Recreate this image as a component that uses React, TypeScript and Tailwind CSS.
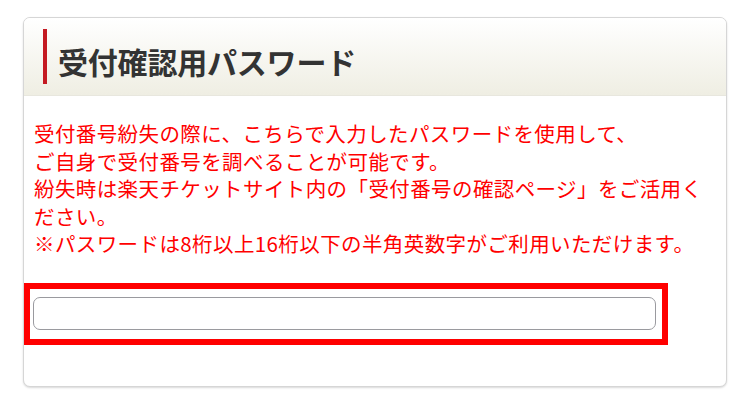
import React from "react";

export default function App() {
  const jp = { fontFamily: '"Noto Sans CJK JP", "Noto Sans", sans-serif' };
  return (
    <div className="w-[750px] h-[409px] bg-white pt-[17px] pl-[23px]" style={jp}>
      <div className="w-[704px] h-[370px] rounded-[7px] border border-[#d6d6d6] shadow-[0_1px_2px_rgba(0,0,0,0.15)] overflow-hidden bg-white flex flex-col">
        <div className="h-[78px] bg-gradient-to-b from-white to-[#efeee3] border-b border-[#e8e7de] flex items-center pl-[19px]">
          <div className="w-[4px] h-[55px] bg-[#c41a22]" />
          <h1 className="ml-[11px] mt-[8px] text-[30px] font-bold text-[#333333] leading-none tracking-[-0.2px]">
            受付確認用パスワード
          </h1>
        </div>
        <div className="pt-[24px] pl-[10px] text-[20.5px] leading-[27.5px] text-[#ff0000] whitespace-nowrap tracking-[0.4px]">
          受付番号紛失の際に、こちらで入力したパスワードを使用して、<br />
          ご自身で受付番号を調べることが可能です。<br />
          紛失時は楽天チケットサイト内の「受付番号の確認ページ」をご活用く<br />
          ださい。<br />
          ※パスワードは8桁以上16桁以下の半角英数字がご利用いただけます。
        </div>
        <div className="mt-[25px] w-[644px] border-[6px] border-[#ff0000] pl-[3px] pr-[6px] pt-[8px] pb-[9px]">
          <input
            type="text"
            className="block w-full h-[33px] rounded-[7px] border-[1.5px] border-[#9a9a9f] bg-white outline-none"
          />
        </div>
      </div>
    </div>
  );
}
